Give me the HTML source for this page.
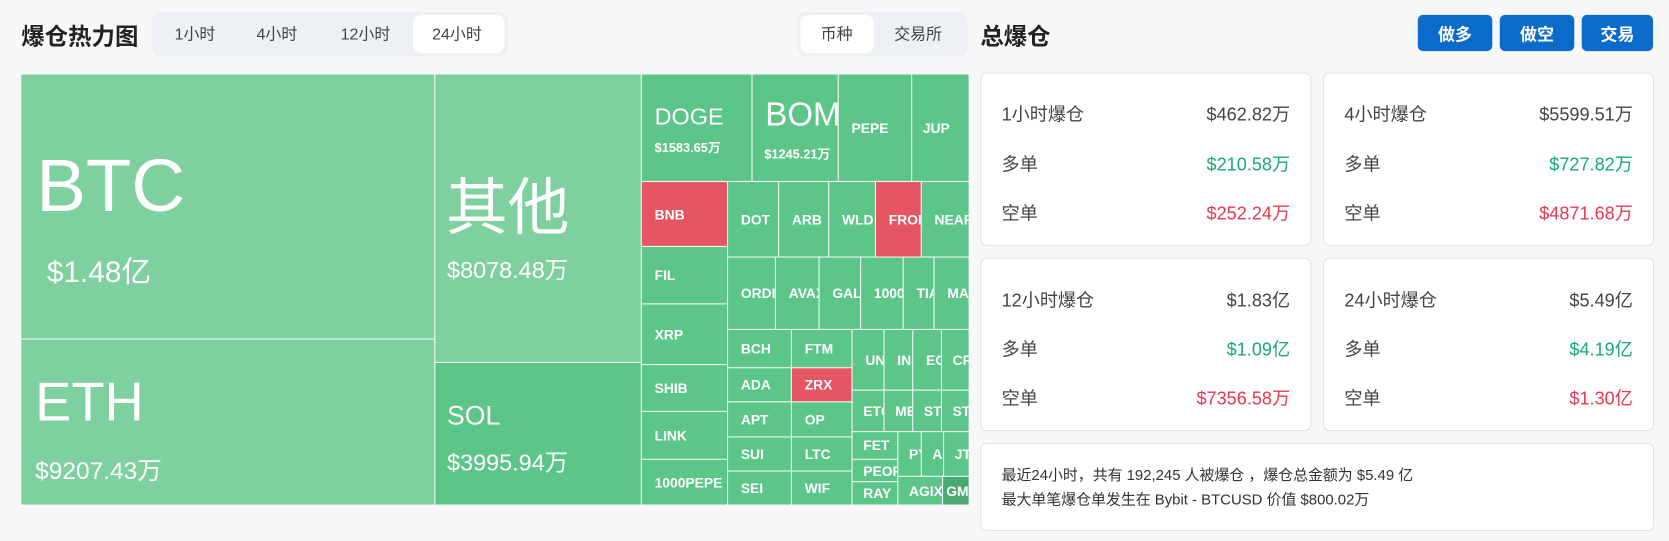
<!DOCTYPE html>
<html><head><meta charset="utf-8"><style>
*{margin:0;padding:0;box-sizing:border-box}
body{width:1669px;height:541px;background:#f8f8f8;font-family:"Liberation Sans","Noto Sans CJK SC",sans-serif;overflow:hidden;color:#222}
#w{position:absolute;left:0;top:0;width:1568px;height:508px;transform:scale(1.06441);transform-origin:0 0}
.a{position:absolute}
.c{position:absolute;color:#fff;overflow:hidden;white-space:nowrap;background:#5cc689;font-size:13px;font-weight:bold;display:flex;align-items:center;padding-left:12px}
.l{background:#7ed19e}.r{background:#e55563}
.big{font-weight:normal}
.tab{position:absolute;top:21px;font-size:15px;color:#444}
.btn{position:absolute;top:14px;height:34px;background:#0b6bcb;color:#fff;border-radius:5px;font-weight:bold;font-size:16px;display:flex;align-items:center;justify-content:center}
.card{position:absolute;background:#fff;border:1px solid #e2e2e2;border-radius:6px}
.row{position:absolute;left:19px;right:19px;font-size:17px;color:#444;display:flex;justify-content:space-between}
.g{color:#16a97b}.rd{color:#e8384f}
</style></head><body><div id="w">
<div class="a" style="left:20px;top:17px;font-size:22px;font-weight:bold">爆仓热力图</div>
<div class="a" style="left:143px;top:11px;width:334px;height:42px;background:#edf0f4;border-radius:8px"></div>
<div class="a" style="left:388px;top:14px;width:86px;height:36px;background:#fff;border-radius:8px"></div>
<div class="tab" style="left:164px">1小时</div><div class="tab" style="left:241px">4小时</div><div class="tab" style="left:320px">12小时</div><div class="tab" style="left:406px">24小时</div>
<div class="a" style="left:749px;top:11px;width:160px;height:42px;background:#edf0f4;border-radius:8px"></div>
<div class="a" style="left:752px;top:14px;width:69px;height:36px;background:#fff;border-radius:8px"></div>
<div class="tab" style="left:771px">币种</div><div class="tab" style="left:840px">交易所</div>

<div class="c l big" style="left:20px;top:70px;width:388px;height:248px;display:block;padding:0"><div class="a" style="left:14px;top:64px;font-size:70px">BTC</div><div class="a" style="left:24px;top:164px;font-size:28px">$1.48亿</div></div>
<div class="c l big" style="left:20px;top:319px;width:388px;height:155px;display:block;padding:0"><div class="a" style="left:13px;top:29px;font-size:51px">ETH</div><div class="a" style="left:13px;top:104px;font-size:23px">$9207.43万</div></div>
<div class="c l big" style="left:409px;top:70px;width:193px;height:270px;display:block;padding:0"><div class="a" style="left:10px;top:78px;font-size:58px">其他</div><div class="a" style="left:11px;top:166px;font-size:22px">$8078.48万</div></div>
<div class="c big" style="left:409px;top:341px;width:193px;height:133px;display:block;padding:0"><div class="a" style="left:11px;top:36px;font-size:25px">SOL</div><div class="a" style="left:11px;top:76px;font-size:22px">$3995.94万</div></div>
<div class="c big" style="left:603px;top:70px;width:103px;height:100px;display:block;padding:0"><div class="a" style="left:12px;top:27px;font-size:22px">DOGE</div><div class="a" style="left:12px;top:60px;font-size:12px;font-weight:bold">$1583.65万</div></div>
<div class="c big" style="left:707px;top:70px;width:80px;height:100px;display:block;padding:0"><div class="a" style="left:12px;top:20px;font-size:31px">BOME</div><div class="a" style="left:11px;top:66px;font-size:12px;font-weight:bold">$1245.21万</div></div>
<div class="c" style="left:788px;top:70px;width:68px;height:100px">PEPE</div>
<div class="c" style="left:857px;top:70px;width:53px;height:100px;padding-left:10px">JUP</div>
<div class="c r" style="left:603px;top:171px;width:80px;height:60px">BNB</div>
<div class="c" style="left:603px;top:232px;width:80px;height:53px">FIL</div>
<div class="c" style="left:603px;top:286px;width:80px;height:56px">XRP</div>
<div class="c" style="left:603px;top:343px;width:80px;height:43px">SHIB</div>
<div class="c" style="left:603px;top:387px;width:80px;height:44px">LINK</div>
<div class="c" style="left:603px;top:432px;width:80px;height:42px">1000PEPE</div>
<div class="c" style="left:684px;top:171px;width:47px;height:70px">DOT</div>
<div class="c" style="left:732px;top:171px;width:46px;height:70px">ARB</div>
<div class="c" style="left:779px;top:171px;width:43px;height:70px">WLD</div>
<div class="c r" style="left:823px;top:171px;width:42px;height:70px">FRONT</div>
<div class="c" style="left:866px;top:171px;width:44px;height:70px">NEAR</div>
<div class="c" style="left:684px;top:242px;width:44px;height:67px">ORDI</div>
<div class="c" style="left:729px;top:242px;width:40px;height:67px">AVAX</div>
<div class="c" style="left:770px;top:242px;width:38px;height:67px">GALA</div>
<div class="c" style="left:809px;top:242px;width:39px;height:67px">1000</div>
<div class="c" style="left:849px;top:242px;width:28px;height:67px">TIA</div>
<div class="c" style="left:878px;top:242px;width:32px;height:67px">MA</div>
<div class="c" style="left:684px;top:310px;width:59px;height:35px">BCH</div>
<div class="c" style="left:744px;top:310px;width:56px;height:35px">FTM</div>
<div class="c" style="left:684px;top:346px;width:59px;height:31px">ADA</div>
<div class="c r" style="left:744px;top:346px;width:56px;height:31px">ZRX</div>
<div class="c" style="left:684px;top:378px;width:59px;height:32px">APT</div>
<div class="c" style="left:744px;top:378px;width:56px;height:32px">OP</div>
<div class="c" style="left:684px;top:411px;width:59px;height:31px">SUI</div>
<div class="c" style="left:744px;top:411px;width:56px;height:31px">LTC</div>
<div class="c" style="left:684px;top:443px;width:59px;height:31px">SEI</div>
<div class="c" style="left:744px;top:443px;width:56px;height:31px">WIF</div>
<div class="c" style="left:801px;top:310px;width:29px;height:56px;padding-left:12px">UNI</div>
<div class="c" style="left:831px;top:310px;width:26px;height:56px;padding-left:12px">INJ</div>
<div class="c" style="left:858px;top:310px;width:26px;height:56px;padding-left:12px">EOS</div>
<div class="c" style="left:885px;top:310px;width:25px;height:56px;padding-left:10px">CRV</div>
<div class="c" style="left:801px;top:367px;width:29px;height:38px;padding-left:10px">ETC</div>
<div class="c" style="left:831px;top:367px;width:26px;height:38px;padding-left:10px">MEME</div>
<div class="c" style="left:858px;top:367px;width:26px;height:38px;padding-left:10px">STX</div>
<div class="c" style="left:885px;top:367px;width:25px;height:38px;padding-left:10px">STRK</div>
<div class="c" style="left:801px;top:406px;width:42px;height:25px;padding-left:10px">FET</div>
<div class="c" style="left:801px;top:432px;width:42px;height:20px;padding-left:10px">PEOPLE</div>
<div class="c" style="left:801px;top:453px;width:42px;height:21px;padding-left:10px">RAY</div>
<div class="c" style="left:844px;top:406px;width:21px;height:41px;padding-left:10px">PYTH</div>
<div class="c" style="left:866px;top:406px;width:20px;height:41px;padding-left:10px">AR</div>
<div class="c" style="left:887px;top:406px;width:23px;height:41px;padding-left:10px">JTO</div>
<div class="c" style="left:844px;top:448px;width:41px;height:26px;padding-left:10px">AGIX</div>
<div class="c" style="left:886px;top:448px;width:24px;height:26px;padding-left:3px;background:#4aa873">GMT</div>

<div class="a" style="left:921px;top:17px;font-size:22px;font-weight:bold">总爆仓</div>
<div class="btn" style="left:1332px;width:70px">做多</div>
<div class="btn" style="left:1409px;width:70px">做空</div>
<div class="btn" style="left:1486px;width:67px">交易</div>

<div class="card" style="left:921px;top:68px;width:311px;height:163px">
<div class="row" style="top:24px"><span>1小时爆仓</span><span>$462.82万</span></div>
<div class="row" style="top:71px"><span>多单</span><span class="g">$210.58万</span></div>
<div class="row" style="top:117px"><span>空单</span><span class="rd">$252.24万</span></div></div>
<div class="card" style="left:1243px;top:68px;width:311px;height:163px">
<div class="row" style="top:24px"><span>4小时爆仓</span><span>$5599.51万</span></div>
<div class="row" style="top:71px"><span>多单</span><span class="g">$727.82万</span></div>
<div class="row" style="top:117px"><span>空单</span><span class="rd">$4871.68万</span></div></div>
<div class="card" style="left:921px;top:242px;width:311px;height:163px">
<div class="row" style="top:25px"><span>12小时爆仓</span><span>$1.83亿</span></div>
<div class="row" style="top:71px"><span>多单</span><span class="g">$1.09亿</span></div>
<div class="row" style="top:117px"><span>空单</span><span class="rd">$7356.58万</span></div></div>
<div class="card" style="left:1243px;top:242px;width:311px;height:163px">
<div class="row" style="top:25px"><span>24小时爆仓</span><span>$5.49亿</span></div>
<div class="row" style="top:71px"><span>多单</span><span class="g">$4.19亿</span></div>
<div class="row" style="top:117px"><span>空单</span><span class="rd">$1.30亿</span></div></div>
<div class="card" style="left:921px;top:416px;width:633px;height:83px;font-size:14px;color:#333;padding:18px 0 0 19px;line-height:23px">
最近24小时，共有 192,245 人被爆仓 ，爆仓总金额为 $5.49 亿<br>最大单笔爆仓单发生在 Bybit - BTCUSD 价值 $800.02万</div>
</div></body></html>
